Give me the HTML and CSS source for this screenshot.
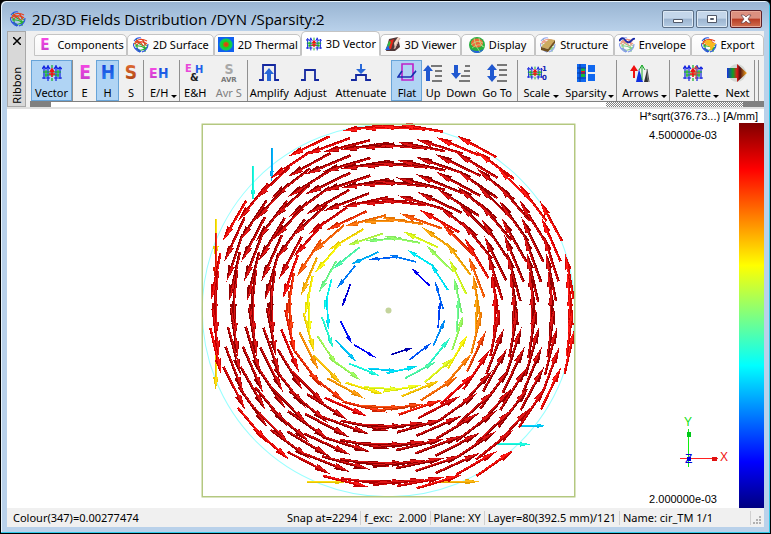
FILE: index.html
```html
<!DOCTYPE html>
<html lang="en">
<head>
<meta charset="utf-8">
<title>2D/3D Fields Distribution</title>
<link rel="stylesheet" href="styles.css">
</head>
<body>
<svg class="defs" aria-hidden="true">
  <defs>
    <linearGradient id="pink" x2="0" y2="1"><stop offset="0" stop-color="#ff4ae8"/><stop offset="1" stop-color="#c03cc8"/></linearGradient>
    <linearGradient id="blue" x2="0" y2="1"><stop offset="0" stop-color="#1238d8"/><stop offset="1" stop-color="#2a86f4"/></linearGradient>
    <linearGradient id="rust" x2="0" y2="1"><stop offset="0" stop-color="#e87038"/><stop offset="1" stop-color="#a84010"/></linearGradient>
    <linearGradient id="rain"><stop offset="0" stop-color="#1830e0"/><stop offset=".3" stop-color="#10a020"/><stop offset=".5" stop-color="#e01818"/><stop offset=".65" stop-color="#501010"/><stop offset="1" stop-color="#ffb020"/></linearGradient>
    <radialGradient id="heat"><stop offset="0" stop-color="#f03010"/><stop offset=".3" stop-color="#c06010"/><stop offset=".5" stop-color="#10d820"/><stop offset=".85" stop-color="#10c860"/><stop offset="1" stop-color="#1060f0"/></radialGradient>
    <symbol id="i-mesh" viewBox="0 0 16 16"><g fill="none" stroke-width="1.1"><path stroke="#28b030" d="M1 6Q4 7 4 10T7 15M3 2Q5 7 9 8T12 15M10 3Q11 8 15 9M2 9Q8 8 13 12M6 13Q10 14 14 10"/><path stroke="#e84020" d="M2 5Q7 0 14 4M4 8Q8 2 14 7M4 4Q8 5 10 9M8 2Q12 4 12 9M1 7Q6 3 12 6"/><path stroke="#2850e0" d="M0 6Q1 13 7 15M1 11Q5 11 8 15M9 15Q15 13 15 7M1 4Q4 0 8 1"/></g></symbol>
    <symbol id="i-vector" viewBox="0 0 20 18"><path stroke="#1020e0" stroke-width="1.200" fill="none" d="M2 3v12M6 1v16M14 1v16M18 3v12M0 5l2-3 2 3 2-3 2 3M12 5l2-3 2 3 2-2 2 2M0 14h8M12 14h8"/><path stroke="#10b020" stroke-width="1.200" fill="none" d="M1 8h18M3 11h14M10 1v3M10 14v3M4 6v7M16 6v7"/><path stroke="#f01010" stroke-width="1.600" fill="none" d="M10 5v8M8 8l2-3 2 3M7 10h6"/></symbol>
    <symbol id="i-heat" viewBox="0 0 16 16"><path fill="#1060f0" d="M0 0h16v15H0z"/><rect x="1" y="1" width="14" height="13" rx="4" fill="url(#heat)"/></symbol>
    <symbol id="i-view" viewBox="0 0 16 16"><path fill="#503838" d="M4 2L13 0l2 10-5 4H1z"/><path fill="#e82818" d="M4 4l5-2-3 10H3z"/><path fill="#30b840" d="M1 11l3-7 2 1-3 8z"/><path fill="#f4d8c8" d="M9 6l4-6 2 1-5 11z"/><path fill="#2860e0" d="M0 13l3-5 2 5z"/><path stroke="#d0b0a8" d="M15 1L9 12"/></symbol>
    <symbol id="i-disc" viewBox="0 0 16 16"><circle cx="8" cy="8" r="8" fill="#28b040"/><path fill="#2860e0" d="M1 12q7 4 14 0-3 4-7 4t-7-4"/><ellipse cx="8" cy="6" rx="6" ry="4.500" fill="#f06838"/><path stroke="#b8f090" fill="none" stroke-width=".7" d="M2 8q6-6 12-2M3 11q7-6 12-1M5 1q0 7 6 14M10 1q0 5 4 9"/></symbol>
    <symbol id="i-struct" viewBox="0 0 16 16"><use href="#i-mesh" opacity=".5"/><path fill="#ccaa60" d="M1 10L9 2l6 1-7 9z"/><path fill="#705020" d="M1 10l7 2v3l-7-2zM8 12l7-9v3l-7 9z"/></symbol>
    <symbol id="i-env" viewBox="0 0 16 16"><use href="#i-mesh" opacity=".55"/><path fill="none" stroke="#1828a8" stroke-width="1.800" d="M0 4q3-5 6-1t6 1q2-3 4-2"/></symbol>
    <symbol id="i-export" viewBox="0 0 16 16"><use href="#i-mesh"/><path fill="#f8b820" d="M3 5q6-5 9 1l3 0-5 8q-1-1-1-4-3-1-6-5z"/></symbol>
    <symbol id="i-e" viewBox="0 0 20 20"><text x="10" y="16" text-anchor="middle" class="glyph" fill="url(#pink)">E</text></symbol>
    <symbol id="i-h" viewBox="0 0 20 20"><text x="10" y="16" text-anchor="middle" class="glyph" fill="url(#blue)">H</text></symbol>
    <symbol id="i-s" viewBox="0 0 20 20"><text x="10" y="16" text-anchor="middle" class="glyph" fill="url(#rust)">S</text></symbol>
    <symbol id="i-eh" viewBox="0 0 20 20"><text x="0" y="15" class="glyph-m" fill="url(#pink)">E</text><text x="9" y="15" class="glyph-m" fill="url(#blue)">H</text></symbol>
    <symbol id="i-eandh" viewBox="0 0 20 20"><text x="0" y="9" class="glyph-s" fill="#e848d8">E</text><text x="10" y="10" class="glyph-s" fill="#2060e8">H</text><text x="5" y="18" class="glyph-s" fill="#202020">&amp;</text></symbol>
    <symbol id="i-savr" viewBox="0 0 20 20"><text x="10" y="11" text-anchor="middle" class="glyph-m" fill="#a8a8a8">S</text><text x="2" y="19" class="glyph-xs" fill="#787878">AVR</text></symbol>
    <symbol id="i-amp" viewBox="0 0 20 20"><path fill="none" stroke="#1428a0" stroke-width="1.800" d="M0 17h4V2h12v15h4"/><path fill="#2868d8" d="M10 5l5 6h-3v7H8v-7H5z"/></symbol>
    <symbol id="i-adj" viewBox="0 0 20 20"><path fill="none" stroke="#1428a0" stroke-width="1.800" d="M1 17h4V7h10v10h4"/></symbol>
    <symbol id="i-att" viewBox="0 0 20 20"><path fill="none" stroke="#1428a0" stroke-width="1.800" d="M0 17h5v-5h10v5h5"/><path fill="#2868d8" d="M10 11L5 6h4V1h2v5h4z"/></symbol>
    <symbol id="i-flat" viewBox="0 0 20 20"><path fill="none" stroke="#c020c8" stroke-width="1.600" d="M5 1h11v16H5z"/><path fill="none" stroke="#1830b0" stroke-width="1.600" d="M5 8L1 14h13l5-6-3 3"/></symbol>
    <symbol id="i-up" viewBox="0 0 20 20"><path fill="#2058d0" d="M5 2l5 6H7v10H3V8H0z"/><path stroke="#505050" stroke-width="1.300" d="M8 3h11M12 8h7M12 13h7M9 18h10"/></symbol>
    <symbol id="i-down" viewBox="0 0 20 20"><path fill="#2058d0" d="M3 2h4v8h3l-5 6-5-6h3z"/><path stroke="#505050" stroke-width="1.300" d="M14 3h5M13 8h6M10 13h9M8 18h11"/></symbol>
    <symbol id="i-goto" viewBox="0 0 20 20"><path fill="#2058d0" d="M5 1l5 6H7v6h3l-5 6-5-6h3V7H0z"/><path stroke="#505050" stroke-width="1.300" d="M10 2h10M12 7h8M12 12h8M10 18h10"/></symbol>
    <symbol id="i-scale" viewBox="0 0 20 20"><use href="#i-vector" x="0" y="2" width="16" height="16"/><text x="15" y="8" class="glyph-xs" fill="#1020b0">1</text><text x="15" y="17" class="glyph-xs" fill="#1020b0">0</text></symbol>
    <symbol id="i-sparse" viewBox="0 0 20 20"><path fill="#1068f0" d="M1 1h9v18H1zM12 2h7v7h-7zM12 11h7v7h-7z"/><path fill="#18b838" d="M5 5h4v9H5z"/><path fill="#f01818" d="M5 8h4v3H5z"/><path stroke="#0838a0" d="M4 1v18M1 5h9M1 10h9M1 15h9"/></symbol>
    <symbol id="i-arrows" viewBox="0 0 20 20"><path fill="#f01010" d="M4 2l4 6H5v7H3V8H0z"/><path fill="#1030e0" d="M6 19l3-13 4 13z"/><path fill="none" stroke="#18a828" d="M12 17V2m-3 5l3-5 3 5"/><path fill="#303030" d="M14 19l3-12 1 12z"/><path stroke="#505050" fill="none" d="M17 6l2 13"/></symbol>
    <symbol id="i-pal" viewBox="0 0 20 20"><use href="#i-vector" y="1" width="20" height="18"/><path stroke="#d85030" fill="none" d="M13 3v13M11 6l2-3 2 3M10 10h7"/></symbol>
    <symbol id="i-next" viewBox="0 0 20 20"><ellipse cx="10" cy="10" rx="9" ry="9" fill="#d4d8d4"/><path fill="url(#rain)" d="M0 5h10V1l10 9-10 9v-4H0z"/></symbol>
  </defs>
</svg>
<main class="window">
  <header class="titlebar">
    <svg class="icon16"><use href="#i-mesh"/></svg>
    <h1>2D/3D Fields Distribution /DYN /Sparsity:2</h1>
    <div class="winbtns">
      <button type="button" aria-label="Minimize"><svg viewBox="0 0 12 10"><path fill="#fff" stroke="#505868" d="M1.500 5.500h9v3h-9z"/></svg></button>
      <button type="button" aria-label="Maximize"><svg viewBox="0 0 12 10"><path fill="#fff" stroke="#505868" fill-rule="evenodd" d="M1.500 1.500h9v7h-9zM4.500 4.500h3v1h-3z"/></svg></button>
      <button type="button" class="close" aria-label="Close"><svg viewBox="0 0 12 10"><path fill="#fff" stroke="#604048" stroke-width=".7" d="M1 1h3l2 2 2-2h3L8 5l3 4H8L6 7 4 9H1l3-4z"/></svg></button>
    </div>
  </header>
  <div class="client">
    <section class="ribbon">
      <div class="grip"><button type="button" aria-label="Close ribbon"><svg viewBox="0 0 8 8"><path stroke="#000" stroke-width="1.500" d="M0 0l8 8M8 0L0 8"/></svg></button><span>Ribbon</span></div>
      <div class="ribbon-main">
        <nav class="tabs">
          <button type="button"><svg><use href="#i-e"/></svg>Components</button>
          <button type="button"><svg><use href="#i-mesh"/></svg>2D Surface</button>
          <button type="button"><svg><use href="#i-heat"/></svg>2D Thermal</button>
          <button type="button" class="active"><svg><use href="#i-vector"/></svg>3D Vector</button>
          <button type="button"><svg><use href="#i-view"/></svg>3D Viewer</button>
          <button type="button"><svg><use href="#i-disc"/></svg>Display</button>
          <button type="button"><svg><use href="#i-struct"/></svg>Structure</button>
          <button type="button"><svg><use href="#i-env"/></svg>Envelope</button>
          <button type="button"><svg><use href="#i-export"/></svg>Export</button>
        </nav>
        <div class="tools">
          <button type="button" class="on"><svg><use href="#i-vector"/></svg>Vector</button>
          <button type="button" class="cut"><svg><use href="#i-e"/></svg>E</button>
          <button type="button" class="on"><svg><use href="#i-h"/></svg>H</button>
          <button type="button"><svg><use href="#i-s"/></svg>S</button>
          <button type="button" class="cut drop"><svg><use href="#i-eh"/></svg>E/H</button>
          <button type="button" class="cut"><svg><use href="#i-eandh"/></svg>E&amp;H</button>
          <button type="button" disabled><svg><use href="#i-savr"/></svg>Avr S</button>
          <button type="button" class="cut"><svg><use href="#i-amp"/></svg>Amplify</button>
          <button type="button"><svg><use href="#i-adj"/></svg>Adjust</button>
          <button type="button"><svg><use href="#i-att"/></svg>Attenuate</button>
          <button type="button" class="on cut"><svg><use href="#i-flat"/></svg>Flat</button>
          <button type="button"><svg><use href="#i-up"/></svg>Up</button>
          <button type="button"><svg><use href="#i-down"/></svg>Down</button>
          <button type="button"><svg><use href="#i-goto"/></svg>Go To</button>
          <button type="button" class="cut drop"><svg><use href="#i-scale"/></svg>Scale</button>
          <button type="button" class="drop"><svg><use href="#i-sparse"/></svg>Sparsity</button>
          <button type="button" class="cut drop"><svg><use href="#i-arrows"/></svg>Arrows</button>
          <button type="button" class="cut drop"><svg><use href="#i-pal"/></svg>Palette</button>
          <button type="button"><svg><use href="#i-next"/></svg>Next</button>
          <span class="end"></span>
        </div>
        <div class="strip"><i class="thumb"></i><i class="track"></i><i class="hatch"></i><i class="thumb"></i></div>
      </div>
    </section>
    <section class="stage">
      <svg class="plot" viewBox="7 109 620 398" role="img" aria-label="Vector field">
        <circle cx="388" cy="310" r="186" fill="none" stroke="#98ffff"/>
        <g id="field" shape-rendering="crispEdges"></g>
        <rect x="202" y="124" width="372" height="372" fill="none" stroke="#b4c880" stroke-width="1.500"/>
        <circle cx="388" cy="310" r="3" fill="#c4d49c"/>
      </svg>
      <aside class="legend">
        <p class="unit">H*sqrt(376.73...) [A/mm]</p>
        <div class="scale">
          <div class="labels">
            <span>4.500000e-03</span>
            <svg class="triad" viewBox="0 0 58 60" shape-rendering="crispEdges">
              <path stroke="#10f010" d="M17.500 18v38"/><path fill="#00c818" d="M16 21h4v5h-4z"/>
              <path stroke="#ff2020" d="M9 47.500h38"/><path fill="#e01010" d="M41 46h5v4h-5z"/>
              <path fill="#0000d8" d="M16 46h4v4h-4z"/>
              <text x="13" y="15" fill="#10e010">Y</text><text x="49" y="50" fill="#f01010">X</text><text x="14" y="52" fill="#0000d8">Z</text>
            </svg>
            <span>2.000000e-03</span>
          </div>
          <div class="bar"></div>
        </div>
      </aside>
    </section>
    <footer class="status">
      <span class="colour">Colour(347)=0.00277474</span>
      <span>Snap at=2294</span><span>f_exc:&nbsp; 2.000</span><span>Plane: XY</span><span>Layer=80(392.5 mm)/121</span><span class="name">Name: cir_TM 1/1</span>
      <svg class="sizer" viewBox="0 0 9 9"><path fill="#b0b0b0" d="M6 0h2v2H6zM3 3h2v2H3zM6 3h2v2H6zM0 6h2v2H0zM3 6h2v2H3zM6 6h2v2H6z"/></svg>
    </footer>
  </div>
</main>
<script src="field.js"></script>
</body>
</html>
```
FILE: field.js
```js
// Magnetic field of the TM010 mode: azimuthal, with a J1 radial profile.
const CX = 388, CY = 310, RADIUS = 186, STEP = 18.6, X0 = 215.5, Y0 = 127.5;
const MAX_LEN = 51;
const out = [];

function j1(x) {
  let term = x / 2, sum = term;
  for (let k = 1; k < 10; k++) {
    term *= -(x * x) / 4 / (k * (k + 1));
    sum += term;
  }
  return sum;
}

function jet(t, gain, white) {
  const c = s => Math.max(0, Math.min(1, 1.5 - Math.abs(4 * t - s)));
  return 'rgb(' + [c(3), c(2), c(1)].map(v => Math.round(255 * (v * gain * (1 - white) + white))).join() + ')';
}

function arrow(x, y, ux, uy, len, t) {
  const head = len * 0.33, w = 1 + t * 1.7, half = len / 2;
  const at = (a, b) => (x + ux * a - uy * b).toFixed(1) + ' ' + (y + uy * a + ux * b).toFixed(1);
  const shade = t > 0.8 ? 0.82 : 0.9;
  const lit = jet(Math.min(t, 0.91), 1, t > 0.6 ? 0.08 : 0), dark = jet(Math.min(t, 0.95), shade, 0);
  out.push(
    `<path stroke="${dark}" stroke-width="${w.toFixed(1)}" d="M${at(-half, 0)}L${at(half - head, 0)}"/>`,
    `<path stroke="${lit}" stroke-width="1" d="M${at(-half, -0.5)}L${at(half - head, -0.5)}"/>`,
    `<path fill="${dark}" d="M${at(half, 0)}L${at(half - head, w + 0.7)}L${at(half - head, -w - 0.7)}z"/>`,
    `<path fill="${lit}" d="M${at(half, 0)}L${at(half - head, -w)}L${at(half - head, 0.6)}z"/>`
  );
}

// Boundary cells keep one field component: [column, row, ux, uy, length, level].
const edge = [
  [3, 2, 0, 1, 33, 0.3], [2, 3, 0, 1, 36, 0.4], [0, 6, 0, 1, 40, 0.65],
  [0, 7, 0, 1, 50, 0.85], [0, 13, 0, 1, 40, 0.66], [6, 19, 1, 0, 41, 0.66],
  [13, 19, 1, 0, 43, 0.7], [16, 17, 1, 0, 34, 0.4], [17, 16, 1, 0, 26, 0.33]
];
const special = new Set(edge.map(e => e[0] + ',' + e[1]));

edge.forEach(([i, j, ux, uy, len, t]) => {
  arrow(X0 + i * STEP, Y0 + j * STEP, ux, uy, len, t);
});

for (let j = 0; j < 20; j++) {
  for (let i = 0; i < 20; i++) {
    if (special.has(i + ',' + j)) continue;
    const x = X0 + i * STEP, y = Y0 + j * STEP;
    const dx = x - CX, dy = y - CY, r = Math.hypot(dx, dy);
    if (r < 42.5 || r > (x < 295 ? 180.9 : RADIUS + 0.3)) continue;
    const h = j1(2.405 * r / RADIUS) / 0.582;
    const level = (h - 0.444) / 0.556;
    arrow(x, y, dy / r, -dx / r, h * MAX_LEN, r > 120 ? Math.max(level, 0.87) : level + 0.03);
  }
}
document.getElementById('field').innerHTML = out.join('');
```
FILE: styles.css
```css
* { box-sizing: border-box; }
body {
  margin: 0;
  background: #000;
  font: 11px/14px "Noto Sans", "DejaVu Sans Condensed", sans-serif;
  color: #000;
}
.defs { position: absolute; width: 0; height: 0; }
button {
  font: inherit;
  color: inherit;
  padding: 0;
  margin: 0;
  border: 0;
  background: none;
  white-space: nowrap;
}
.glyph { font: bold 19px "DejaVu Sans Condensed", sans-serif; }
.glyph-m { font: bold 14px "DejaVu Sans Condensed", sans-serif; }
.glyph-s { font: bold 11px "DejaVu Sans Condensed", sans-serif; }
.glyph-xs { font: bold 7px "DejaVu Sans", sans-serif; }

.window {
  height: 100vh;
  display: flex;
  flex-direction: column;
  padding: 1px 5px 6px;
  border: 1px solid #000;
  border-radius: 6px 6px 0 0;
  box-shadow: inset -1px -1px 0 #30c8e8, inset 1px 1px 0 #e8f4fc;
  background: linear-gradient(#98b4d2, #b9d1ea 30px);
}
.titlebar {
  flex: none;
  height: 29px;
  display: flex;
  align-items: center;
  gap: 6px;
  padding: 5px 3px 0 4px;
}
.titlebar h1 {
  margin: 0;
  flex: 1;
  font: 15px/20px "Open Sans", "Noto Sans", sans-serif;
  white-space: nowrap;
}
.icon16 { width: 16px; height: 16px; }
.winbtns { display: flex; gap: 2px; }
.winbtns button {
  width: 32px;
  height: 18px;
  border: 1px solid #5c7088;
  border-radius: 2px;
  box-shadow: inset 0 0 0 1px #dce8f4;
  background: linear-gradient(#c4d6ea 45%, #9cb4d0 50%, #b4cce4);
  display: grid;
  place-items: center;
}
.winbtns .close {
  border-color: #5c2028;
  box-shadow: inset 0 0 0 1px #e8a898;
  background: linear-gradient(#dc9080 45%, #b83c24 50%, #d07050);
}
.winbtns svg { width: 12px; height: 10px; }

.client {
  flex: 1;
  min-height: 0;
  margin-left: 1px;
  margin-right: 1px;
  display: flex;
  flex-direction: column;
  background: #fff;
}
.ribbon { flex: none; display: flex; background: #f0f0f0; border-bottom: 2px solid #e0e0e0; }
.grip {
  width: 19px;
  display: flex;
  flex-direction: column;
  align-items: center;
  justify-content: space-between;
  padding: 5px 0 2px;
  border: 1px solid #a8a8a8;
  background: #d8d8d8;
}
.grip button { display: block; }
.grip svg { display: block; width: 8px; height: 8px; }
.grip span { writing-mode: vertical-rl; transform: rotate(180deg); }
.ribbon-main { flex: 1; min-width: 0; padding-left: 4px; }

.tabs {
  display: grid;
  grid-template-columns: 93fr 87fr 87fr 79fr 80fr 74fr 79fr 77fr 73fr;
  align-items: end;
  height: 25px;
  padding-left: 4px;
}
.tabs button {
  height: 22px;
  display: flex;
  align-items: center;
  justify-content: center;
  gap: 4px;
  border: 1px solid #c4c4c4;
  border-radius: 5px 5px 0 0;
  background: linear-gradient(#fff, #f6f6f6);
  min-width: 0;
}
.tabs svg { width: 16px; height: 16px; flex: none; }
.tabs .active { height: 25px; border-bottom-color: #fff; background: #fff; }

.tools {
  display: grid;
  grid-template-columns: 41fr 24fr 23fr 24fr 36fr 31fr 37fr 43fr 40fr 61fr 30fr 23fr 33fr 39fr 44fr 55fr 53fr 52fr 33fr 5fr;
  height: 45px;
  padding: 4px 5px 0 1px;
  background: #f0f0f0;
}
.tools button {
  display: flex;
  flex-direction: column;
  align-items: center;
  justify-content: space-between;
  padding: 3px 0 1px;
  min-width: 0;
}
.tools svg { width: 20px; height: 20px; }
.tools .cut { border-left: 1px solid #909090; }
.tools .on { background: #b0d4f4; outline: 1px solid #68a4d8; outline-offset: -1px; }
.tools .end { border-left: 1px solid #909090; border-right: 1px solid #909090; }
.tools button:disabled { color: #808080; }
.tools .drop { position: relative; padding-right: 5px; }
.drop::after {
  content: "";
  position: absolute;
  right: 2px;
  bottom: 3px;
  border: 3px solid transparent;
  border-top-color: #000;
  border-bottom: 0;
}
.strip { display: flex; height: 6px; border-top: 1px solid #808080; }
.thumb { flex: 21; background: #808080; }
.track { flex: 554; background: #fff; }
.hatch { flex: 137; background: conic-gradient(#808080 25%, #fff 0 50%, #808080 0 75%, #fff 0) 0 0 / 2px 2px; }

.stage { flex: 1; min-height: 0; display: flex; }
.plot { flex: 620; min-width: 0; height: 100%; }
.legend {
  flex: 136;
  display: flex;
  flex-direction: column;
  font-family: "Liberation Sans", sans-serif;
  white-space: nowrap;
}
.unit { margin: 0; padding-right: 6px; text-align: right; }
.scale { flex: 1; display: flex; }
.labels {
  flex: 1;
  display: flex;
  flex-direction: column;
  align-items: flex-end;
  padding: 5px 22px 2px 0;
}
.triad { width: 58px; height: 60px; margin-top: auto; margin-right: -12px; margin-bottom: 21px; font-size: 12px; }
.bar {
  width: 25px;
  background: linear-gradient(#800000, #f00 12%, #ff0 37%, #0ff 63%, #00f 88%, #000080);
}

.status {
  flex: none;
  height: 19px;
  display: flex;
  align-items: center;
  background: #f0f0f0;
  white-space: nowrap;
}
.status span { padding: 0 3px; border-right: 1px solid #d0d0d0; }
.status .colour { flex: 1; padding-left: 6px; border: 0; }
.status .name { padding-right: 37px; }
.sizer { width: 9px; height: 9px; margin: 6px 2px 0; }
```
